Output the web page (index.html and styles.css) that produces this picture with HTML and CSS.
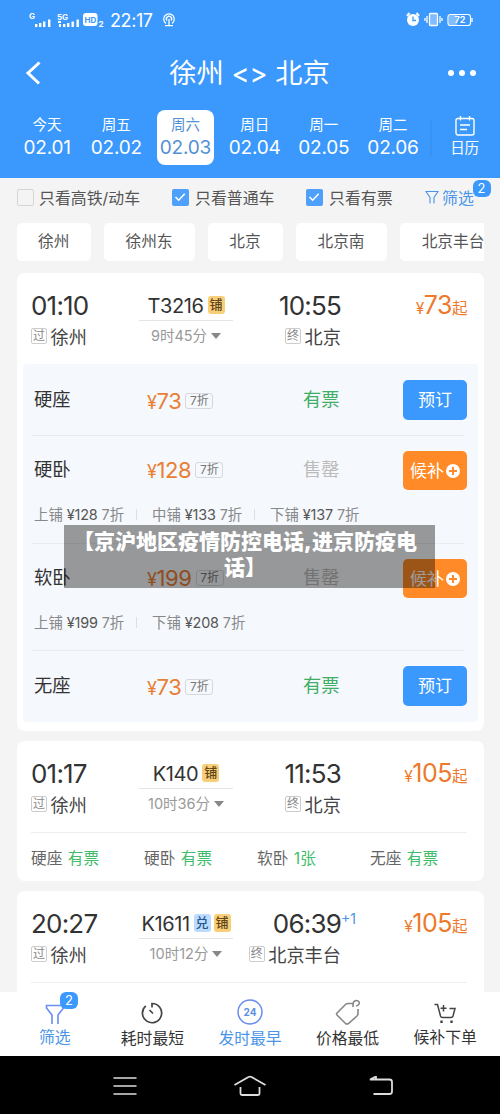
FILE: index.html
```html
<!DOCTYPE html>
<html lang="zh-CN">
<head>
<meta charset="utf-8">
<title>徐州 - 北京</title>
<link rel="stylesheet" href="styles.css">
</head>
<body>
<header class="header">
  <div class="status">
    <svg class="signals" width="76" height="18" viewBox="0 0 76 18" fill="#fff">
      <text x="0" y="7" class="net">G</text>
      <path d="M6 12h2.400v3H6zM10 11h2.400v4H10zM14 9.500h2.400v5.500H14zM19 7.500h2.400v7.500H19z"/>
      <text x="28" y="7.500" class="net">5G</text>
      <path d="M29 9h3v2h-3zM30 12h2v3h-2zM34 12h2.400v3H34zM38 11h2.400v4H38zM42.500 9.500h2.400v5.500h-2.400zM47.500 7.500h2.400v7.500h-2.400z"/>
      <rect x="54" y="1" width="14.500" height="13" rx="3"/>
      <text x="55.500" y="10.500" class="hd">HD</text>
      <text x="69.500" y="15" class="net">2</text>
    </svg>
    <span class="clock">22:17</span>
    <svg class="loc" width="14" height="16" viewBox="0 0 14 16" fill="none" stroke="#fff" stroke-width="1.300"><path d="M4 11.500A5.300 5.300 0 1 1 10 11.500M5 8.500a2.600 2.600 0 1 1 4 0M7 7v7M3 13.700h8"/></svg>
    <svg class="sysicons" width="70" height="18" viewBox="0 0 70 18" fill="none" stroke="#fff">
      <circle cx="8" cy="9" r="6" fill="#fff" stroke="none"/><path d="M2 5l2.500-3M14 5l-2.500-3" stroke-width="2"/><path d="M8 5.500V9.500h3" stroke="#3b98fc" stroke-width="1.300"/>
      <rect x="24.500" y="2.500" width="8" height="12" rx="1" fill="#81bdff" stroke-width="1.300"/><path d="M22 5v7M35 5v7M20 7v3M37 7v3" stroke-width="1.300"/>
      <rect x="43" y="3.500" width="22.500" height="11" rx="2.500" stroke-width="1.200"/><path d="M44 4h8v10h-8z" fill="#81bdff" stroke="none"/><path d="M67 7v4" stroke-width="1.300"/>
      <text x="49.500" y="12.300" class="batt">72</text>
    </svg>
  </div>
  <div class="titlebar">
    <svg width="18" height="26" viewBox="0 0 18 26" fill="none" stroke="#fff" stroke-width="3"><path d="M14.500 2.500L3 13l11 10.500"/></svg>
    <h1 class="title">徐州 &lt;&gt; 北京</h1>
    <svg width="30" height="8" viewBox="0 0 30 8" fill="#fff"><circle cx="4" cy="4" r="3"/><circle cx="15" cy="4" r="3"/><circle cx="26" cy="4" r="3"/></svg>
  </div>
  <nav class="dates">
    <div class="date"><span>今天</span><b>02.01</b></div>
    <div class="date"><span>周五</span><b>02.02</b></div>
    <div class="date active"><span>周六</span><b>02.03</b></div>
    <div class="date"><span>周日</span><b>02.04</b></div>
    <div class="date"><span>周一</span><b>02.05</b></div>
    <div class="date"><span>周二</span><b>02.06</b></div>
    <div class="calendar">
      <svg width="20" height="20" viewBox="0 0 20 20" fill="none" stroke="#fff" stroke-width="1.400"><rect x="1" y="2.500" width="18" height="16.500" rx="2"/><path d="M5.500 0v4.500M14.500 0v4.500M5 9h10M5 13.500h7"/></svg>
      <span>日历</span>
    </div>
  </nav>
</header>

<section class="filters">
  <label class="check c1"><i class="box"></i>只看高铁/动车</label>
  <label class="check c2"><i class="box on"><svg width="16" height="16" viewBox="0 0 16 16" fill="none" stroke="#fff" stroke-width="1.600"><path d="M3.500 8l3.200 3.200 6-6.400"/></svg></i>只看普通车</label>
  <label class="check c3"><i class="box on"><svg width="16" height="16" viewBox="0 0 16 16" fill="none" stroke="#fff" stroke-width="1.600"><path d="M3.500 8l3.200 3.200 6-6.400"/></svg></i>只看有票</label>
  <div class="filter"><svg width="14" height="15" viewBox="0 0 14 15" fill="none" stroke="#4a95e8" stroke-width="1.100"><path d="M5 13.500V7.500L1 1.500h12L9 7.500v6"/></svg>筛选<em class="badge">2</em></div>
</section>
<section class="chips">
  <span class="chip w1">徐州</span><span class="chip w2">徐州东</span><span class="chip w3">北京</span><span class="chip w2">北京南</span><span class="chip last">北京丰台</span>
</section>

<main class="list">
  <article class="card open">
    <div class="trip">
      <div class="stop"><div class="time">01:10</div><div class="station"><i>过</i>徐州</div></div>
      <div class="train"><div class="number">T3216<i class="tag">铺</i></div><div class="duration">9时45分<s></s></div></div>
      <div class="stop end"><div class="time">10:55</div><div class="station"><i>终</i>北京</div></div>
      <div class="price"><small>¥</small>73<small>起</small></div>
    </div>
    <div class="seats">
      <div class="seat r1"><div class="main"><span>硬座</span><span class="fare"><small>¥</small>73<i>7折</i></span><span class="yes">有票</span><button class="btn">预订</button></div></div>
      <div class="seat r2"><div class="main"><span>硬卧</span><span class="fare"><small>¥</small>128<i>7折</i></span><span class="no">售罄</span><button class="btn wait">候补<svg width="14" height="14" viewBox="0 0 14 14"><circle cx="7" cy="7" r="7" fill="#fff"/><path d="M7 3v8M3 7h8" stroke="#ff8a27" stroke-width="2"/></svg></button></div>
        <div class="berths"><span>上铺 <b>¥128</b> 7折</span><span>中铺 <b>¥133</b> 7折</span><span>下铺 <b>¥137</b> 7折</span></div></div>
      <div class="seat r3"><div class="main"><span>软卧</span><span class="fare"><small>¥</small>199<i>7折</i></span><span class="no">售罄</span><button class="btn wait">候补<svg width="14" height="14" viewBox="0 0 14 14"><circle cx="7" cy="7" r="7" fill="#fff"/><path d="M7 3v8M3 7h8" stroke="#ff8a27" stroke-width="2"/></svg></button></div>
        <div class="berths"><span>上铺 <b>¥199</b> 7折</span><span>下铺 <b>¥208</b> 7折</span></div></div>
      <div class="seat r4"><div class="main"><span>无座</span><span class="fare"><small>¥</small>73<i>7折</i></span><span class="yes">有票</span><button class="btn">预订</button></div></div>
    </div>
  </article>

  <article class="card short">
    <div class="trip">
      <div class="stop"><div class="time">01:17</div><div class="station"><i>过</i>徐州</div></div>
      <div class="train"><div class="number">K140<i class="tag">铺</i></div><div class="duration">10时36分<s></s></div></div>
      <div class="stop end"><div class="time">11:53</div><div class="station"><i>终</i>北京</div></div>
      <div class="price"><small>¥</small>105<small>起</small></div>
    </div>
    <div class="summary"><span>硬座 <b>有票</b></span><span>硬卧 <b>有票</b></span><span>软卧 <b>1张</b></span><span>无座 <b>有票</b></span></div>
  </article>

  <article class="card short">
    <div class="trip">
      <div class="stop"><div class="time">20:27</div><div class="station"><i>过</i>徐州</div></div>
      <div class="train"><div class="number">K1611<i class="tag swap">兑</i><i class="tag">铺</i></div><div class="duration">10时12分<s></s></div></div>
      <div class="stop end"><div class="time">06:39<sup>+1</sup></div><div class="station"><i>终</i>北京丰台</div></div>
      <div class="price"><small>¥</small>105<small>起</small></div>
    </div>
    <div class="summary"></div>
  </article>
</main>

<nav class="tabs">
  <div class="tab on first"><svg width="22" height="24" viewBox="0 0 22 24" fill="none" stroke="#6b8cf0" stroke-width="1.600"><path d="M8 22V13L2.500 6V3.500h17V6L14 13v9"/></svg><span>筛选</span><em class="badge">2</em></div>
  <div class="tab"><svg width="24" height="24" viewBox="0 0 24 24" fill="none" stroke="#444" stroke-width="1.700"><path d="M12 6.500V2.500A9.600 9.600 0 1 1 5.800 4.800M9.500 9l3.500 3.500"/></svg><span>耗时最短</span></div>
  <div class="tab on"><svg width="26" height="26" viewBox="0 0 26 26" fill="none" stroke="#6b8cf0" stroke-width="1.500"><circle cx="13" cy="13" r="12"/><text x="13" y="16.500" text-anchor="middle" class="day">24</text></svg><span>发时最早</span></div>
  <div class="tab"><svg width="26" height="26" viewBox="0 0 26 26" fill="none" stroke="#888" stroke-width="1.600"><path d="M19 4.500h-6q-1.500 0-2.500 1L2 14q-1 1 0 2l8.500 8.500q1.500 1 3 0L22 17q1-1 1-2.500V10M18 8V5q.5-3.500 3.500-3.500 3.500.5 2.500 3.500-.5 1.500-3 2"/></svg><span>价格最低</span></div>
  <div class="tab cart"><svg width="24" height="22" viewBox="0 0 24 22" fill="none" stroke="#444" stroke-width="1.500"><path d="M1.500 2.500h3L7.500 14q.5 1.500 2 1.500h8.500q1.500 0 2-1.500L22 6.500H16.500M10.500 3v6.500M7.500 6.300h6"/><path d="M8.500 18.500v2.500M18.500 18.500v2.500" stroke-width="2.400"/></svg><span>候补下单</span></div>
</nav>

<footer class="sysnav">
  <svg width="24" height="20" viewBox="0 0 24 20" fill="none" stroke="#ddd" stroke-width="1.700"><path d="M.5 2h23M.5 10h23M.5 18h23"/></svg>
  <svg width="34" height="22" viewBox="0 0 34 22" fill="none" stroke="#ddd" stroke-width="1.800"><path d="M1.500 10L15.500 2q1.500-.8 3 0l14 8M7.500 12v6.500q0 1.500 1.500 1.500h16q1.500 0 1.500-1.500V12"/></svg>
  <svg width="24" height="20" viewBox="0 0 24 20" fill="none" stroke="#ddd" stroke-width="1.800"><path d="M1 3.500h19.500q2.500 0 2.500 2.500v9.500q0 2.500-2.500 2.500H4.500M1 3.500l6-3v3z"/></svg>
</footer>

<div class="caption">【京沪地区疫情防控电话,进京防疫电<br>话】</div>
</body>
</html>
```
FILE: styles.css
```css
* { box-sizing: border-box; }
body {
  margin: 0; width: 500px; height: 1114px; overflow: hidden; position: relative;
  display: flex; flex-direction: column; background: #f4f4f4;
  font-family: Inter, "Noto Sans CJK SC", sans-serif; color: #333;
}
i, em { font-style: normal; }
b, h1 { font-weight: 400; }

.header { height: 178px; flex: none; background: #3b98fc; color: #fff; }
.status { height: 40px; display: flex; align-items: center; padding: 0 27px 0 29px; }
.signals { margin-right: 5px; margin-top: 2px; }
.net { font: 700 8px Inter, sans-serif; }
.hd { font: 700 8px Inter, sans-serif; fill: #3b98fc; }
.batt { font: 700 9px Inter, sans-serif; fill: #fff; stroke: none; }
.clock { font-size: 18px; letter-spacing: -.4px; width: 43px; white-space: nowrap; }
.loc { margin-left: 9px; }
.sysicons { margin-left: auto; margin-right: -2px; }
.titlebar { height: 66px; display: flex; align-items: center; justify-content: space-between; padding: 0 23px 0 25px; }
.title { margin: 0 -9px 0 0; font-size: 27.300px; line-height: 40px; padding-top: 1px; }
.dates { display: flex; height: 55px; margin: 4px 0 0 12.500px; }
.date { width: 69.200px; display: flex; flex-direction: column; align-items: center; padding-top: 4px; }
.date span, .calendar span { font-size: 14.500px; line-height: 21px; }
.date b { font-size: 19px; line-height: 24px; letter-spacing: -.2px; margin-top: 1px; }
.date.active { width: 57px; margin: 0 6.100px; background: #fff; border-radius: 8px; color: #5290d5; }
.calendar { margin-left: 2px; width: 70px; background: linear-gradient(#3893f6, #3893f6) left center / 2px 38px no-repeat; display: flex; flex-direction: column; align-items: center; padding-top: 6px; }
.calendar span { margin-top: 1px; }

.filters { height: 39px; flex: none; display: flex; align-items: center; padding-left: 17px; font-size: 15.900px; color: #555; white-space: nowrap; }
.check { display: flex; align-items: center; }
.c1 { width: 155px; } .c2 { width: 134px; } .c3 { width: 119px; }
.box { width: 17px; height: 17px; border: 1px solid #d5d5d5; border-radius: 2px; margin-right: 5px; display: flex; }
.box.on { border: 0; background: #4fa0fa; margin-right: 6px; }
.filter { position: relative; display: flex; align-items: center; gap: 3px; color: #4a95e8; }
.badge { position: absolute; width: 18px; height: 17px; border-radius: 6px; background: #3b98fc; color: #fff; font-size: 13px; line-height: 17px; text-align: center; }
.filter .badge { left: 47.500px; top: -6px; }
.chips { flex: none; margin: 6px 16px 12px 17px; display: flex; gap: 13px; overflow: hidden; height: 38px; }
.chip { flex: none; background: #fff; border-radius: 5px; line-height: 37px; text-align: center; font-size: 15.700px; color: #555; }
.w1 { width: 73.500px; } .w2 { width: 91px; } .w3 { width: 75px; } .last { width: 107px; }

.list { height: 719px; flex: none; margin: 0 16px 0 17px; display: flex; flex-direction: column; gap: 10px; overflow: hidden; }
.card { flex: none; background: #fff; border-radius: 8px; }
.open { height: 458px; }
.short { height: 140px; }
.trip { height: 91px; padding: 17px 17px 0 14px; display: grid; grid-template-columns: 108px 94px 108px 1fr; }
.time { font-size: 26px; line-height: 31px; letter-spacing: -.8px; position: relative; }
.time sup { position: absolute; left: 100%; top: 3px; font-size: 14px; line-height: 16px; color: #4a95e8; letter-spacing: 0; }
.station { display: flex; align-items: center; gap: 3.500px; font-size: 18.200px; line-height: 28px; margin-top: 2px; white-space: nowrap; color: #444; }
.station i { font-size: 12px; line-height: 14px; width: 16px; height: 16px; border: 1px solid #ccc; border-radius: 2px; color: #888; text-align: center; margin-top: -2px; }
.end { display: flex; flex-direction: column; align-items: flex-end; }
.number { height: 31px; border-bottom: 1px solid #e4e4e4; display: flex; justify-content: center; align-items: center; gap: 4px; font-size: 20px; letter-spacing: -.4px; white-space: nowrap; padding-top: 2px; }
.tag { background: #f8cf78; border-radius: 3px; width: 17px; height: 18px; font-size: 13px; line-height: 17px; text-align: center; color: #5e4518; letter-spacing: 0; font-weight: 500; margin-top: -3px; }
.swap { background: #bcdcff; color: #27568f; margin-right: -1px; }
.duration { display: flex; align-items: center; justify-content: center; gap: 4px; font-size: 14.500px; line-height: 29px; color: #999; }
.duration s { border: 5px solid transparent; border-top: 6px solid #888; border-bottom: 0; }
.price { text-align: right; font-size: 25px; line-height: 30px; color: #ee792b; letter-spacing: -.5px; white-space: nowrap; }
.price small { font-size: 15.500px; }

.seats { margin: 0 6px; height: 358px; background: #f5f8fc; border-radius: 4px; padding: 0 11px 0 9px; }
.seat { background: linear-gradient(#e9edf2, #e9edf2) left bottom / 432px 1px no-repeat; }
.r1 { height: 72px; padding-top: 16px; }
.r2 { height: 108px; padding-top: 15px; }
.r3 { height: 107px; padding-top: 15px; }
.r4 { height: 71px; padding-top: 15px; background: none; }
.main { display: grid; grid-template-columns: 113px 156px 100px 64px; padding-left: 2px; font-size: 18.300px; line-height: 38px; height: 40px; align-items: start; }
.fare { color: #e87f35; font-size: 22px; letter-spacing: -.4px; line-height: 42px; display: flex; align-items: baseline; }
.r2 .main, .r3 .main { line-height: 36px; }
.r2 .fare, .r3 .fare { line-height: 38px; }
.fare small { font-size: 18px; }
.fare i { margin: -3px 0 0 4px; align-self: center; border: 1px solid #d5d8dc; border-radius: 3px; width: 28px; height: 16px; line-height: 13px; font-size: 12px; text-align: center; color: #777; letter-spacing: 0; }
.yes { color: #3fae67; } .no { color: #bbb; }
.btn { border: 0; padding: 0; height: 40px; border-radius: 5px; background: #3b98fc; color: #fff; font: inherit; font-size: 17px; display: flex; align-items: center; justify-content: center; line-height: 38px; }
.wait { height: 39px; background: #ff8a27; gap: 2px; line-height: 36px; }
.berths { display: flex; padding-left: 2px; margin-top: 10px; font-size: 14.400px; line-height: 27px; color: #888; white-space: nowrap; }
.berths b { color: #555; letter-spacing: -.2px; }
.berths span { width: 118px; position: relative; }
.berths span + span::before { content: ""; position: absolute; left: -16px; top: 8px; height: 11px; border-left: 1px solid #dcdfe3; }

.summary { margin: 0 17px 0 14px; border-top: 1px solid #eee; display: grid; grid-template-columns: repeat(4, 113px); height: 49px; line-height: 51px; font-size: 15.700px; color: #666; word-spacing: 1px; white-space: nowrap; }
.summary b { color: #3fbd6a; }

.tabs { height: 64px; flex: none; background: #fff; display: flex; padding: 0 6px; }
.tab { flex: 1; position: relative; display: flex; flex-direction: column; align-items: center; justify-content: flex-end; font-size: 15.800px; padding-bottom: 6px; }
.tab span { line-height: 22px; margin-top: 3px; }
.on { color: #4a95e8; }
.first, .cart { padding-bottom: 7px; }
.first span { margin-top: 1px; }
.first .badge { left: 54px; top: 0; }
.day { font: 700 10px Inter, sans-serif; fill: #5b8fe8; stroke: none; }

.sysnav { height: 59px; flex: none; background: #000; display: flex; align-items: center; padding: 0 106px 0 113px; gap: 96px; }
.sysnav svg + svg + svg { margin-left: 6px; }

.caption { position: absolute; left: 64px; top: 525px; width: 371px; height: 63px; padding: 4px 9px 0 0; background: rgba(0, 0, 0, .39); color: #fff; font-size: 21px; line-height: 26px; font-weight: 900; text-align: center; white-space: nowrap; }
```
